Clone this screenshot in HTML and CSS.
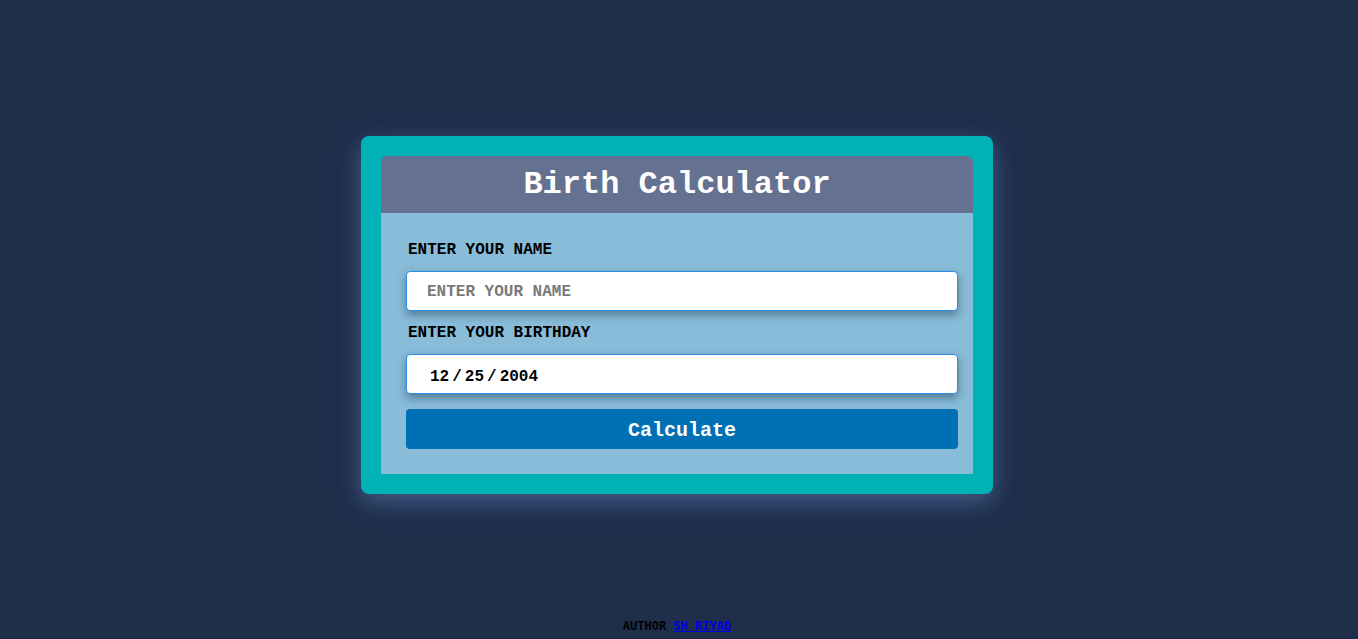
FILE: index.html
```html
<!DOCTYPE html>
<html lang="en">
<head>
<meta charset="UTF-8">
<title>Birth Calculator</title>
<link rel="stylesheet" href="styles.css">
</head>
<body>
<main class="page">
  <div class="card">
    <div class="card-inner">
      <header class="card-header">
        <h1 class="title">Birth Calculator</h1>
      </header>
      <form class="card-body">
        <label class="label" for="name">ENTER YOUR NAME</label>
        <input class="field" id="name" type="text" placeholder="ENTER YOUR NAME">
        <label class="label label-second" for="bday">ENTER YOUR BIRTHDAY</label>
        <input class="field field-date" id="bday" type="date" value="2004-12-25">
        <button class="btn" type="button">Calculate</button>
      </form>
    </div>
  </div>
</main>
<footer class="footer">AUTHOR <a href="#" class="author-link">SH RIYAD</a></footer>
</body>
</html>
```
FILE: styles.css
```css
* { box-sizing: border-box; }
html, body { height: 100%; }
body {
  margin: 0;
  padding-right: 4px;
  background: #1e2e4b;
  font-family: "Liberation Mono", "Courier New", monospace;
  display: flex;
  flex-direction: column;
  min-height: 100vh;
}
.page {
  flex: 1;
  display: flex;
  justify-content: center;
  align-items: flex-start;
  padding-top: 136px;
}
.card {
  width: 632px;
  background: #00b2b5;
  border-radius: 8px;
  padding: 20px;
  box-shadow: 0 8px 24px rgba(110, 150, 210, 0.45);
}
.card-inner {
  display: flex;
  flex-direction: column;
}
.card-header {
  background: #657190;
  border-radius: 6px 6px 0 0;
  height: 57px;
  padding-top: 11px;
  text-align: center;
}
.title {
  margin: 0;
  font-size: 32px;
  line-height: 36px;
  font-weight: bold;
  color: #ffffff;
}
.card-body {
  background: #88bcd8;
  margin: 0;
  padding: 28px 15px 25px 25px;
  display: flex;
  flex-direction: column;
}
.label {
  display: block;
  margin: 0 0 12px 2px;
  font-size: 16px;
  line-height: 18px;
  font-weight: bold;
  color: #000000;
}
.label-second { margin-bottom: 12px; }
.field {
  display: block;
  width: 100%;
  height: 40px;
  border: 1px solid #2b8fe3;
  border-radius: 4px;
  background: #ffffff;
  padding: 2px 20px 0 20px;
  font-family: "Liberation Mono", "Courier New", monospace;
  font-size: 16px;
  font-weight: bold;
  color: #000000;
  box-shadow: 0 4px 8px rgba(20, 40, 70, 0.45);
  margin: 0 0 13px 0;
  outline: none;
}
.field::placeholder { color: #7a7a7a; opacity: 1; }
.field-date {
  margin-bottom: 15px;
  padding: 5px 20px 0 22px;
}
.field-date::-webkit-calendar-picker-indicator { display: none; }
.field-date::-webkit-datetime-edit-text { padding: 0 2px; }
.field-date::-webkit-datetime-edit-fields-wrapper { padding: 0; }
.btn {
  display: block;
  width: 100%;
  height: 40px;
  border: none;
  border-radius: 4px;
  background: #0070b5;
  color: #ffffff;
  font-family: "Liberation Mono", "Courier New", monospace;
  font-size: 20px;
  font-weight: bold;
  cursor: pointer;
  padding: 2px 0 0 0;
}
.footer {
  text-align: center;
  font-family: "DejaVu Sans Mono", monospace;
  font-size: 12px;
  line-height: 14px;
  font-weight: bold;
  color: #000000;
  padding-bottom: 6px;
}
.author-link { color: #0000ee; text-decoration: underline; }
```
